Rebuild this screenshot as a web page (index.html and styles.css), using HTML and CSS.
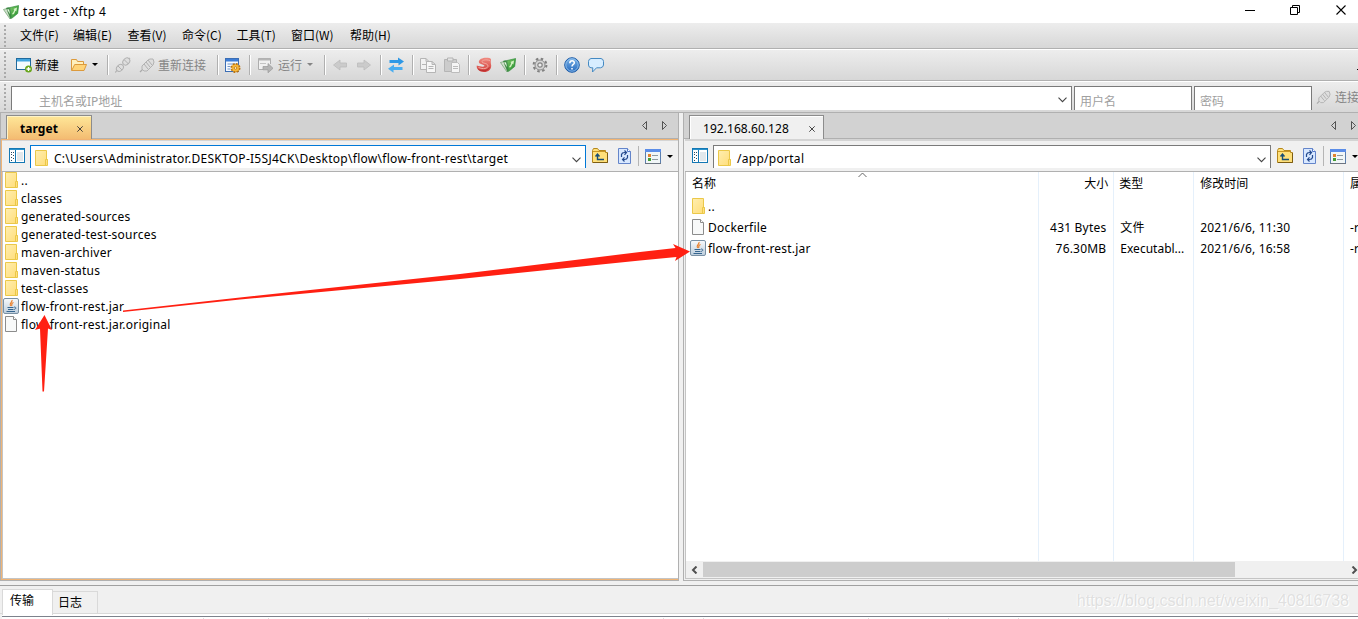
FILE: index.html
```html
<!DOCTYPE html>
<html lang="zh-CN">
<head>
  <meta charset="UTF-8">
  <title>target - Xftp 4</title>
  <link rel="stylesheet" href="styles.css">
</head>
<body>
  <svg width="0" height="0" class="defs">
    <defs>
      <linearGradient id="gFolder" x1="0" y1="0" x2="1" y2="1">
        <stop offset="0" stop-color="#ffeeb0"/><stop offset="1" stop-color="#ffdd78"/>
      </linearGradient>
      <linearGradient id="gGreen" x1="0" y1="0" x2="1" y2="1">
        <stop offset="0" stop-color="#7cc865"/><stop offset="1" stop-color="#1f8a2c"/>
      </linearGradient>
      <linearGradient id="gRed" x1="0" y1="0" x2="0" y2="1">
        <stop offset="0" stop-color="#f08a80"/><stop offset="1" stop-color="#cf3d3a"/>
      </linearGradient>
      <linearGradient id="gBlue" x1="0" y1="0" x2="0" y2="1">
        <stop offset="0" stop-color="#7db4e8"/><stop offset="1" stop-color="#2468bd"/>
      </linearGradient>
      <linearGradient id="gSteel" x1="0" y1="0" x2="0" y2="1">
        <stop offset="0" stop-color="#f8fafc"/><stop offset="1" stop-color="#bccddc"/>
      </linearGradient>
    </defs>
    <symbol id="xftp" viewBox="0 0 16 16">
      <path d="M.5 5.500l3.500-1 4 9-1 1.500z" fill="#d0dfcc" stroke="#6aa06c" stroke-width=".7"/>
      <path d="M3.500 4l3-.5 2 9.500-1 1.500z" fill="#3f8f46" stroke="#37803e" stroke-width=".6"/>
      <path d="M4 5.500l2-.3 1.200 5z" fill="#e8f5e3"/>
      <path d="M7 3.500L15.700 1.500 14.700 9.500 8.500 14.500 8 11z" fill="url(#gGreen)" stroke="#2b8a37" stroke-width=".6"/>
      <path d="M9.500 10c2.300-1 1.500-3 2.800-4.500" fill="none" stroke="#d5f3c4" stroke-width="1.400"/>
      <path d="M10.300 5l3.700-1.500-.7 4z" fill="#d5f3c4"/>
    </symbol>
    <symbol id="new" viewBox="0 0 16 16">
      <rect x=".5" y="1.500" width="14" height="11" fill="#f4fbff" stroke="#206a9d"/>
      <rect x="1" y="2" width="13" height="2.500" fill="#42a5df"/>
      <circle cx="12.500" cy="12" r="3.500" fill="#69a61d"/>
      <path d="M12.500 10v4M10.500 12h4" stroke="#fff" stroke-width="1.300"/>
    </symbol>
    <symbol id="open" viewBox="0 0 16 16">
      <path d="M.5 13.500v-11h5l1 2h6v3" fill="#fff0bd" stroke="#dc9a3c"/>
      <path d="M.7 13.500l3-6h11.800l-2.500 6z" fill="#ffd478" stroke="#dc9a3c"/>
    </symbol>
    <symbol id="plug" viewBox="0 0 16 16">
      <path d="M1 15l3-3" stroke="#aaa" stroke-width="1.200"/>
      <path d="M3 9l6-6 2-1 3 0 1 3-1 3-6 6-3 0-2-2z" fill="#dedede" stroke="#b2b2b2"/>
      <path d="M5 7l4 5M7 5l4 5M9 3l4 5" stroke="#b0b0b0" stroke-width="1"/>
    </symbol>
    <symbol id="unlink" viewBox="0 0 16 16">
      <path d="M0 15.500l3-3M13 3l2-2" stroke="#b5b5b5" stroke-width="1.200"/>
      <ellipse cx="4.900" cy="10.900" rx="3" ry="3.900" transform="rotate(45 4.900 10.900)" fill="#dedede" stroke="#b0b0b0"/>
      <ellipse cx="11.300" cy="4.500" rx="3" ry="3.900" transform="rotate(45 11.300 4.500)" fill="#dedede" stroke="#b0b0b0"/>
      <path d="M3 9l4 4M9.500 3l4 4" stroke="#b0b0b0"/>
    </symbol>
    <symbol id="props" viewBox="0 0 16 16">
      <rect x=".5" y="1.500" width="13" height="13" fill="#f5f9ff" stroke="#3c6eb4"/>
      <rect x="1" y="2" width="12" height="2.500" fill="#3d7dd6"/>
      <path d="M2.500 7h9M2.500 9.500h3M2.500 12h3" stroke="#7296c8"/>
      <circle cx="10.500" cy="11" r="4" fill="#f5b230" stroke="#b87315" stroke-width="2" stroke-dasharray="1.800 1.340"/>
      <circle cx="10.500" cy="11" r="3.200" fill="#f9b93a"/>
      <circle cx="10.500" cy="11" r="1.300" fill="#fff4cf" stroke="#b87315" stroke-width=".8"/>
    </symbol>
    <symbol id="run" viewBox="0 0 16 16">
      <path d="M6 12.500H1.500v-11h12V7" fill="#f1f1f1" stroke="#adadad"/>
      <path d="M1.500 2.500h12" stroke="#b5b5b5" stroke-width="2"/>
      <path d="M3 6.500h6" stroke="#c4c4c4"/>
      <path d="M6 9.500h5v-3l5 4.800-5 4.500v-3H6z" fill="#b5b5b5" stroke="#999" stroke-width=".7"/>
    </symbol>
    <symbol id="back" viewBox="0 0 16 16">
      <path d="M1.500 8L8 3v3h6.500v4H8v3z" fill="#cbcbcb" stroke="#bbb" stroke-width=".8"/>
    </symbol>
    <symbol id="forward" viewBox="0 0 16 16">
      <path d="M14.500 8L8 3v3H1.500v4H8v3z" fill="#cbcbcb" stroke="#bbb" stroke-width=".8"/>
    </symbol>
    <symbol id="swap" viewBox="0 0 16 16">
      <path d="M1.500 3H10V.5l6 4-5.500 4V6h-9z" fill="#2e98e6"/>
      <path d="M14.500 10H6V7.500l-6 4.200 5.500 4V13h9z" fill="#49adf0"/>
    </symbol>
    <symbol id="copy" viewBox="0 0 16 16">
      <path d="M.5 1.500h5.500l3 3v8H.5zM6 1.500v3h3M2 7.500h4" fill="#f2f2f2" stroke="#b5b5b5"/>
      <path d="M6.500 4.500H12l3.500 3v8h-9zM12 4.500v3h3M8.500 9.500h5M8.500 11.500h5" fill="#f7f7f7" stroke="#b5b5b5"/>
    </symbol>
    <symbol id="paste" viewBox="0 0 16 16">
      <path d="M.5 2.500h12v12H.5z" fill="#ccc" stroke="#b5b5b5"/>
      <path d="M3.500 1h5.500v3H3.500z" fill="#e5e5e5" stroke="#b3b3b3"/>
      <path d="M7.500 5.500h6l2 2v8h-8zM9 9.500h5M9 11.500h5" fill="#f5f5f5" stroke="#bcbcbc"/>
    </symbol>
    <symbol id="xshell" viewBox="0 0 16 16">
      <path d="M13.500 1C8 0 3 1.500 2.800 5 3 7.500 8 7 8.500 9 7.500 10.300 4 9.500.8 8.500 0 12 3.500 15 8 15s7.200-2.500 7.200-6.500C15 7 14.500 5.500 15 2z" fill="url(#gRed)"/>
      <path d="M14 3.500C9 2 5.500 3.500 6 5c.5 1.500 6 1 6 4 0 2.500-5 3.500-9.500 1.500" fill="none" stroke="#f4a9a0" stroke-width="1"/>
      <path d="M2.500 12.500c3.500 2 9 1.500 11-2" fill="none" stroke="#b52d2b" stroke-width=".9"/>
    </symbol>
    <symbol id="gear" viewBox="0 0 16 16">
      <circle cx="8" cy="8" r="6.400" fill="none" stroke="#808080" stroke-width="2" stroke-dasharray="2.500 2.526"/>
      <circle cx="8" cy="8" r="5" fill="#d5d5d5" stroke="#8a8a8a" stroke-width="1"/>
      <circle cx="8" cy="8" r="2.200" fill="#ececec" stroke="#858585" stroke-width="1.200"/>
    </symbol>
    <symbol id="help" viewBox="0 0 16 16">
      <circle cx="8" cy="8" r="7.300" fill="url(#gBlue)" stroke="#1d5ca8"/>
      <circle cx="8" cy="8" r="6.200" fill="none" stroke="#9ac8f0" stroke-width=".8"/>
      <path d="M5.800 6.300C5.800 3 10.500 3.200 10.300 6 10.200 7.500 8 7.500 8 9.500M8 11v1.500" fill="none" stroke="#fff" stroke-width="1.500"/>
    </symbol>
    <symbol id="chat" viewBox="0 0 16 16">
      <path d="M3 1.500h10q2.500.5 2.500 3v3.500q-.3 2.500-3 2.800H8.500L4.500 15l.3-4.200H3Q.6 10.500.5 8V4.500Q.5 2 3 1.500z" fill="#d7edff" stroke="#4489c2"/>
    </symbol>
    <symbol id="panes" viewBox="0 0 16 16">
      <rect x=".5" y=".5" width="15" height="14" fill="#fff" stroke="#1478b4"/>
      <path d="M1 1.500h14" stroke="#2a92cc"/>
      <path d="M6.500 2v12" stroke="#1478b4"/>
      <path d="M2 4.500h1M4 4.500h1M2 6.500h1M4 7.500h1M2 9.500h1M4 10.500h1M2 12.500h1" stroke="#2a4a60"/>
      <path d="M8 4h6v9H8z" fill="#e2e8ec"/>
    </symbol>
    <symbol id="folder" viewBox="0 0 13 16">
      <path d="M.5.500h11v9h1v6h-12z" fill="url(#gFolder)" stroke="#ebc849"/>
      <path d="M10.500 15.500v-6h2" fill="none" stroke="#ebc849"/>
    </symbol>
    <symbol id="file" viewBox="0 0 12 16">
      <path d="M.5.500h8l3 3v12H.5z" fill="#f8f9f9" stroke="#8c8c8c"/>
      <path d="M8.500.5v3h3" fill="#fff" stroke="#8c8c8c"/>
    </symbol>
    <symbol id="jar" viewBox="0 0 16 16">
      <rect x=".5" y=".5" width="15" height="15" rx="1.500" fill="url(#gSteel)" stroke="#7990a4"/>
      <path d="M9 2C10 4 5.500 5 7.500 8M10.500 4.500C7.500 5.500 9.500 6.500 8.500 8" fill="none" stroke="#ea7d26" stroke-width="1.200"/>
      <path d="M4.500 9.500h6M5 11.500h5M3.500 13.500h8.500M11 9c3 0 2 2.500-.5 2.500" fill="none" stroke="#35658f" stroke-width="1"/>
    </symbol>
    <symbol id="up" viewBox="0 0 16 16">
      <path d="M.5 14.500v-12l1-2h4l1.500 2h6.500v2h2v10z" fill="#ffe079" stroke="#b4871c"/>
      <path d="M1 3.500h12" stroke="#c89725"/>
      <path d="M12 11.500H5.500V6.500M3.500 8.500l2-2.500 2 2.500" fill="none" stroke="#184e75" stroke-width="1.400"/>
      <path d="M1 14.500h14.500V5" fill="none" stroke="#7c5c12"/>
    </symbol>
    <symbol id="refresh" viewBox="0 0 13 16">
      <path d="M.5.500h9l3 3v12H.5z" fill="#d8e8ff" stroke="#6485ca"/>
      <path d="M9.500.5v3h3" fill="#fff" stroke="#5479c8"/>
      <path d="M3.500 9V6.500q.5-2 3-2H8M6.500 2.500l2 2-2 2.300M9.500 7v2.500q-.5 2-3 2H5M6.500 9.300l-2 2.200 2 2" fill="none" stroke="#244a8e" stroke-width="1.200"/>
    </symbol>
    <symbol id="view" viewBox="0 0 16 15">
      <rect x=".5" y=".5" width="15" height="14" fill="#f1f6f7" stroke="#5b7fae"/>
      <path d="M0 1.500h16" stroke="#5b8de8" stroke-width="3"/>
      <path d="M0 14.500h16" stroke="#6c7480"/>
      <path d="M3 5h3v3H3z" fill="#e2842e"/><path d="M3 9h3v3H3z" fill="#459e35"/>
      <path d="M7 6.500h6M7 10.500h6" stroke="#8e9aa0"/>
    </symbol>
    <symbol id="caret" viewBox="0 0 6 3"><path d="M0 0h6L3 3z" fill="currentColor"/></symbol>
    <symbol id="chev" viewBox="0 0 9 6"><path d="M.5.700l4 4 4-4" fill="none" stroke="#444" stroke-width="1.100"/></symbol>
    <symbol id="left" viewBox="0 0 5 9"><path d="M4.500.5v8L.5 4.500z" fill="none" stroke="#444" stroke-width=".9"/></symbol>
    <symbol id="right" viewBox="0 0 5 9"><path d="M.5.500v8l4-4z" fill="none" stroke="#444" stroke-width=".9"/></symbol>
    <symbol id="close" viewBox="0 0 6 6"><path d="M.3.300l5.400 5.400M5.700.300L.3 5.700" stroke="#333" stroke-width=".9"/></symbol>
  </svg>

  <div class="window">
    <header class="titlebar">
      <svg class="i16"><use href="#xftp"/></svg>
      <h1>target - Xftp 4</h1>
      <svg class="win-buttons" width="104" height="12" viewBox="0 0 104 12">
        <path d="M0 6.500h10" stroke="#000"/>
        <path d="M45.500 3.500h7v7h-7zM47.500 3V1.500h7v7H53" fill="none" stroke="#000"/>
        <path d="M91.500 1.500l9 9M100.500 1.500l-9 9" stroke="#000" stroke-width="1.100"/>
      </svg>
    </header>

    <nav class="menubar bar">
      <span>文件(F)</span><span>编辑(E)</span><span>查看(V)</span><span>命令(C)</span><span>工具(T)</span><span>窗口(W)</span><span>帮助(H)</span>
    </nav>

    <div class="toolbar bar">
      <div class="btn btn-new"><svg class="i16"><use href="#new"/></svg>新建</div>
      <div class="btn btn-open"><svg class="i16"><use href="#open"/></svg><svg class="caret"><use href="#caret"/></svg></div>
      <i class="sep"></i>
      <div class="btn"><svg class="i16"><use href="#unlink"/></svg></div>
      <div class="btn btn-reconnect off"><svg class="i16"><use href="#plug"/></svg>重新连接</div>
      <i class="sep"></i>
      <div class="btn"><svg class="i16"><use href="#props"/></svg></div>
      <i class="sep"></i>
      <div class="btn btn-run off"><svg class="i16"><use href="#run"/></svg>运行<svg class="caret"><use href="#caret"/></svg></div>
      <i class="sep"></i>
      <div class="btn"><svg class="i16"><use href="#back"/></svg></div>
      <div class="btn"><svg class="i16"><use href="#forward"/></svg></div>
      <i class="sep"></i>
      <div class="btn"><svg class="i16"><use href="#swap"/></svg></div>
      <i class="sep"></i>
      <div class="btn"><svg class="i16"><use href="#copy"/></svg></div>
      <div class="btn"><svg class="i16"><use href="#paste"/></svg></div>
      <i class="sep"></i>
      <div class="btn"><svg class="i16"><use href="#xshell"/></svg></div>
      <div class="btn"><svg class="i16"><use href="#xftp"/></svg></div>
      <i class="sep"></i>
      <div class="btn"><svg class="i16"><use href="#gear"/></svg></div>
      <i class="sep"></i>
      <div class="btn"><svg class="i16"><use href="#help"/></svg></div>
      <div class="btn"><svg class="i16"><use href="#chat"/></svg></div>
      <i class="overflow-mark"></i>
    </div>

    <div class="hostbar bar">
      <div class="field host"><span>主机名或IP地址</span><svg class="chev"><use href="#chev"/></svg></div>
      <div class="field user">用户名</div>
      <div class="field pass">密码</div>
      <div class="connect off"><svg class="i16"><use href="#plug"/></svg>连接</div>
    </div>

    <main class="panes">
      <section class="pane local">
        <div class="tabs">
          <div class="tab active"><span>target</span><svg class="close"><use href="#close"/></svg></div>
          <div class="tab-nav"><svg><use href="#left"/></svg><svg><use href="#right"/></svg></div>
        </div>
        <div class="pathbar">
          <svg class="panes-icon"><use href="#panes"/></svg>
          <div class="path focus"><svg class="folder"><use href="#folder"/></svg><span>C:\Users\Administrator.DESKTOP-I5SJ4CK\Desktop\flow\flow-front-rest\target</span><svg class="chev"><use href="#chev"/></svg></div>
          <svg class="i16 up"><use href="#up"/></svg>
          <svg class="refresh"><use href="#refresh"/></svg>
          <i class="vline"></i>
          <svg class="view"><use href="#view"/></svg>
          <svg class="caret"><use href="#caret"/></svg>
        </div>
        <ul class="files">
          <li><svg class="folder"><use href="#folder"/></svg><span>..</span></li>
          <li><svg class="folder"><use href="#folder"/></svg><span>classes</span></li>
          <li><svg class="folder"><use href="#folder"/></svg><span>generated-sources</span></li>
          <li><svg class="folder"><use href="#folder"/></svg><span>generated-test-sources</span></li>
          <li><svg class="folder"><use href="#folder"/></svg><span>maven-archiver</span></li>
          <li><svg class="folder"><use href="#folder"/></svg><span>maven-status</span></li>
          <li><svg class="folder"><use href="#folder"/></svg><span>test-classes</span></li>
          <li><svg class="i16 jar"><use href="#jar"/></svg><span>flow-front-rest.jar</span></li>
          <li><svg class="file"><use href="#file"/></svg><span>flow-front-rest.jar.original</span></li>
        </ul>
      </section>

      <section class="pane remote">
        <div class="tabs">
          <div class="tab"><span>192.168.60.128</span><svg class="close"><use href="#close"/></svg></div>
          <div class="tab-nav"><svg><use href="#left"/></svg><svg><use href="#right"/></svg></div>
        </div>
        <div class="pathbar">
          <svg class="panes-icon"><use href="#panes"/></svg>
          <div class="path"><svg class="folder"><use href="#folder"/></svg><span>/app/portal</span><svg class="chev"><use href="#chev"/></svg></div>
          <svg class="i16 up"><use href="#up"/></svg>
          <svg class="refresh"><use href="#refresh"/></svg>
          <i class="vline"></i>
          <svg class="view"><use href="#view"/></svg>
          <svg class="caret"><use href="#caret"/></svg>
        </div>
        <div class="details">
          <div class="col name">
            <div class="head">名称<svg class="sort" viewBox="0 0 9 6"><path d="M.5 5l4-4 4 4" fill="none" stroke="#666"/></svg></div>
            <div class="cell"><svg class="folder"><use href="#folder"/></svg><span>..</span></div>
            <div class="cell"><svg class="file"><use href="#file"/></svg><span>Dockerfile</span></div>
            <div class="cell"><svg class="i16 jar"><use href="#jar"/></svg><span>flow-front-rest.jar</span></div>
          </div>
          <div class="col size">
            <div class="head">大小</div><div class="cell"></div>
            <div class="cell">431 Bytes</div><div class="cell">76.30MB</div>
          </div>
          <div class="col type">
            <div class="head">类型</div><div class="cell"></div>
            <div class="cell">文件</div><div class="cell exe">Executabl...</div>
          </div>
          <div class="col date">
            <div class="head">修改时间</div><div class="cell"></div>
            <div class="cell">2021/6/6, 11:30</div><div class="cell">2021/6/6, 16:58</div>
          </div>
          <div class="col attr">
            <div class="head">属性</div><div class="cell"></div>
            <div class="cell">-rw</div><div class="cell">-rw</div>
          </div>
        </div>
        <div class="scrollbar">
          <svg width="7" height="8" viewBox="0 0 7 8"><path d="M5.500.5L2 4l3.500 3.500" fill="none" stroke="#505050" stroke-width="2"/></svg>
          <i class="thumb"></i>
          <svg class="sb-right" width="7" height="8" viewBox="0 0 7 8"><path d="M1.500.5L5 4 1.500 7.500" fill="none" stroke="#505050" stroke-width="2"/></svg>
        </div>
      </section>
    </main>

    <footer class="bottom">
      <div class="bottom-tabs">
        <div class="btab active">传输</div>
        <div class="btab">日志</div>
        <div class="watermark">https://blog.csdn.net/weixin_40816738</div>
      </div>
      <div class="transfer-list">
        <i style="width:202px"></i><i style="width:65px"></i><i style="width:100px"></i><i style="width:295px"></i><i style="width:40px"></i><i style="width:165px"></i><i style="width:80px"></i><i style="width:70px"></i>
      </div>
    </footer>

    <svg class="arrows" width="1358" height="619" viewBox="0 0 1358 619">
      <path d="M123 310.500L240 297.500 460 274 640 252 675.500 248 673 244 690 251.500 675 261 676.500 257 640 260.500 460 279 240 299.500 123 312z" fill="#ff2012"/>
      <path d="M44.500 315L52 330l-4-1.500L44 391.500h-1.500L40 328.500 35 330z" fill="#ff2012"/>
    </svg>
  </div>
</body>
</html>
```
FILE: styles.css
```css
* {
  box-sizing: border-box;
}

body {
  margin: 0;
  overflow: hidden;
  font-family: "Noto Sans", "Noto Sans CJK SC", sans-serif;
  font-size: 12px;
  color: #000;
}

h1, ul {
  margin: 0;
  padding: 0;
  list-style: none;
}

svg {
  display: block;
  flex: none;
}

.defs {
  position: absolute;
}

.window {
  position: relative;
  width: 1358px;
  height: 619px;
  overflow: hidden;
  display: flex;
  flex-direction: column;
  background: #f0f0f0;
  white-space: nowrap;
}

.i16 {
  width: 16px;
  height: 16px;
}

.caret {
  width: 6px;
  height: 3px;
}

.chev {
  width: 9px;
  height: 6px;
}

.folder {
  width: 13px;
  height: 16px;
}

.file {
  width: 12px;
  height: 16px;
}

.off {
  color: #858585;
}

/* title and bars */
.titlebar {
  height: 23px;
  padding-left: 3px;
  display: flex;
  align-items: center;
  background: #fff;
}

.titlebar h1 {
  margin-left: 4px;
  font-size: 12px;
  font-weight: normal;
  letter-spacing: 0.4px;
}

.win-buttons {
  margin: -3px 9px 0 auto;
}

.bar {
  flex: none;
  display: flex;
  align-items: center;
  background: radial-gradient(circle, #aaa 1px, transparent 1.3px) 3px 1px / 4px 4px repeat-y, linear-gradient(#ededed, #d7d7d7);
  border-bottom: 1px solid #b0b0b0;
}

.menubar {
  height: 26px;
  padding: 0 0 2px 20px;
  font-family: "Noto Sans CJK SC", sans-serif;
}

.menubar span {
  width: 54.500px;
}

.menubar span:nth-child(1) {
  width: 53px;
}

.menubar span:nth-child(6) {
  width: 59px;
}

.toolbar {
  height: 32px;
  padding-left: 12px;
  border-top: 1px solid #fff;
}

.btn {
  display: flex;
  align-items: center;
  width: 24px;
  padding: 0 0 1px 4px;
}

.btn-new { width: 55px; gap: 3px; }
.btn-open { width: 36px; gap: 5px; }
.btn-reconnect { width: 78px; gap: 3px; }
.btn-run { width: 67px; gap: 5px; }

.sep {
  width: 2px;
  height: 20px;
  margin: 0 2px 0 4px;
  background: linear-gradient(90deg, #b0b0b0 50%, #fff 50%);
}

.overflow-mark {
  width: 1px;
  height: 1px;
  margin: 8px 0 0 auto;
  background: #000;
}

.hostbar {
  height: 32px;
  padding: 4px 0 0 11px;
  align-items: flex-start;
  border-top: 1px solid #fff;
}

.field {
  flex: none;
  height: 24px;
  padding: 6px 0 0 5px;
  display: flex;
  justify-content: space-between;
  background: #fff;
  border: 1px solid #7a7a7a;
  border-bottom: 0;
  line-height: 18px;
  color: #a0a0a0;
}

.host { width: 1061px; padding-left: 27px; }
.host .chev { margin: 4px 4px 0 0; }
.user { width: 118px; margin: 0 2px; }
.pass { width: 118px; }

.connect {
  flex: none;
  display: flex;
  align-items: center;
  gap: 4px;
  margin: 2px 0 0 4px;
}

.connect .i16 {
  width: 15px;
}

/* panes */
.panes {
  flex: none;
  height: 468px;
  display: flex;
  gap: 4px;
}

.pane {
  display: flex;
  flex-direction: column;
  border: 1px solid #b0b0b0;
  border-top: 0;
}

.local {
  width: 679px;
}

.remote {
  width: 675px;
  border-right: 0;
}

.tabs {
  height: 26px;
  padding: 2px 0 0 5px;
  display: flex;
  background: #d2d2d2;
  border-bottom: 1px solid #b0b0b0;
}

.tab {
  height: 25px;
  width: 135px;
  padding: 1px 0 0 13px;
  display: flex;
  align-items: center;
  background: #f0f0f0;
  border: 1px solid #8c8c8c;
  border-bottom: 0;
  box-shadow: inset 1px 1px #fff;
  letter-spacing: 0.05px;
}

.tab.active {
  width: 86px;
  font-weight: bold;
  background: linear-gradient(#ffe798, #f3ba70);
  box-shadow: inset 1px 1px #fff3c6;
}

.close {
  width: 6px;
  height: 6px;
  margin: 1px 8px 0 auto;
}

.tab-nav {
  display: flex;
  gap: 15px;
  margin: 6px 11px 0 auto;
}

.tab-nav svg {
  width: 5px;
  height: 9px;
}

.remote .tab-nav {
  margin-right: 2px;
}

.pathbar {
  height: 33px;
  margin-left: 1px;
  padding: 6px 0 0 7px;
  display: flex;
  border-bottom: 1px solid #b0b0b0;
  box-shadow: inset 0 2px #d4d4d4;
}

.local .pathbar {
  border-left: 1px solid #efb476;
  margin-left: 0;
  box-shadow: inset 0 1px #f2b371, inset 0 2px #d4d4d4;
}

.panes-icon {
  width: 16px;
  height: 16px;
  margin: 3px 5px 0 0;
}

.path {
  flex: none;
  width: 556px;
  height: 23px;
  padding: 1px 4px 0 4px;
  display: flex;
  align-items: center;
  background: #fff;
  border: 1px solid #7a7a7a;
  border-bottom: 0;
  letter-spacing: 0.28px;
}

.path.focus {
  border-color: #0078d7;
}

.path span {
  padding-top: 1px;
}

.path .folder {
  margin-right: 6px;
}

.path .chev {
  margin: 4px 0 0 auto;
}

.remote .path {
  width: 558px;
}

.up {
  margin: 3px 10px 0 6px;
}

.refresh {
  width: 13px;
  height: 16px;
  margin-top: 3px;
}

.vline {
  flex: none;
  width: 1px;
  height: 20px;
  margin: 1px 6px 0 7px;
  background: #b5b5b5;
}

.view {
  width: 16px;
  height: 15px;
  margin: 4px 7px 0 0;
}

.pathbar > .caret {
  margin: 10px 0 0 -1px;
}

.files {
  flex: 1;
  background: #fff;
  border: solid #efb476;
  border-width: 0 0 1px 1px;
  box-shadow: inset 1px -1px #c4c4c4;
  letter-spacing: 0.23px;
}

.files li {
  height: 18px;
  display: flex;
  align-items: flex-start;
  padding-left: 3px;
}

.files li span {
  line-height: 18px;
}

.files .folder { margin-right: 3px; }
.files .file { margin-right: 4px; }
.files .jar { margin: 0 2px 0 -2px; }

/* remote list */
.details {
  height: 389px;
  margin-left: 1px;
  display: flex;
  background: #fff;
  border-left: 1px solid #c4c4c4;
  letter-spacing: 0.2px;
}

.col {
  width: 80px;
  padding-left: 6px;
  border-right: 1px solid #e5f0fb;
}

.col.name { width: 354px; }
.col.size { width: 75px; padding: 0 7px 0 0; text-align: right; }
.col.date { width: 150px; }
.col.attr { border-right: 0; width: 14px; }

.head {
  position: relative;
  height: 24px;
  line-height: 24px;
  letter-spacing: 0;
}

.type .head {
  margin-left: -1px;
}

.size .head {
  margin-right: -2px;
}

.sort {
  position: absolute;
  left: 166px;
  top: 0;
  width: 9px;
  height: 6px;
}

.cell {
  height: 21px;
  line-height: 22px;
}

.exe {
  letter-spacing: 0;
}

.name .cell {
  display: flex;
  align-items: flex-start;
  padding-top: 2px;
}

.name .cell span {
  line-height: 18px;
}

.name .folder { margin-right: 3px; }
.name .file { margin-right: 4px; }
.name .jar { margin: 0 2px 0 -2px; }

.scrollbar {
  height: 18px;
  margin-left: 1px;
  padding-left: 5px;
  display: flex;
  align-items: center;
  background: #f0f0f0;
  border-left: 1px solid #c4c4c4;
  border-bottom: 1px solid #c4c4c4;
}

.thumb {
  width: 532px;
  height: 15px;
  margin: 0 0 0 5px;
  background: #cdcdcd;
}

.sb-right {
  margin-left: auto;
}

/* bottom */
.bottom {
  margin-top: 4px;
  border-top: 1px solid #a0a0a0;
}

.bottom-tabs {
  height: 28px;
  padding: 3px 0 0 2px;
  display: flex;
  border-bottom: 1px solid #d9d9d9;
}

.btab {
  height: 23px;
  width: 45px;
  margin-top: 2px;
  padding-left: 5px;
  border: 1px solid #d9d9d9;
  border-left: 0;
  line-height: 21px;
}

.btab.active {
  width: 51px;
  height: 26px;
  margin: 0;
  padding-left: 7px;
  border-left: 1px solid #d9d9d9;
  border-bottom: 0;
  background: #fff;
  line-height: 22px;
}

.watermark {
  margin: 3px 9px 0 auto;
  font-family: "Liberation Sans", Arial, sans-serif;
  font-size: 16px;
  line-height: 18px;
  color: #e0e0e0;
  text-shadow: 1px 1px #fff, -1px 0 #fafafa;
}

.transfer-list {
  height: 5px;
  margin-left: 2px;
  padding-top: 4px;
  display: flex;
  background: linear-gradient(#fff 2px, #7d828c 2px, #7d828c 3px, #fff 3px);
}

.transfer-list i {
  height: 1px;
  border-right: 1px solid #ddd;
}

/* annotation arrows drawn over the file lists */
.arrows {
  position: absolute;
  left: 0;
  top: 0;
}
```
